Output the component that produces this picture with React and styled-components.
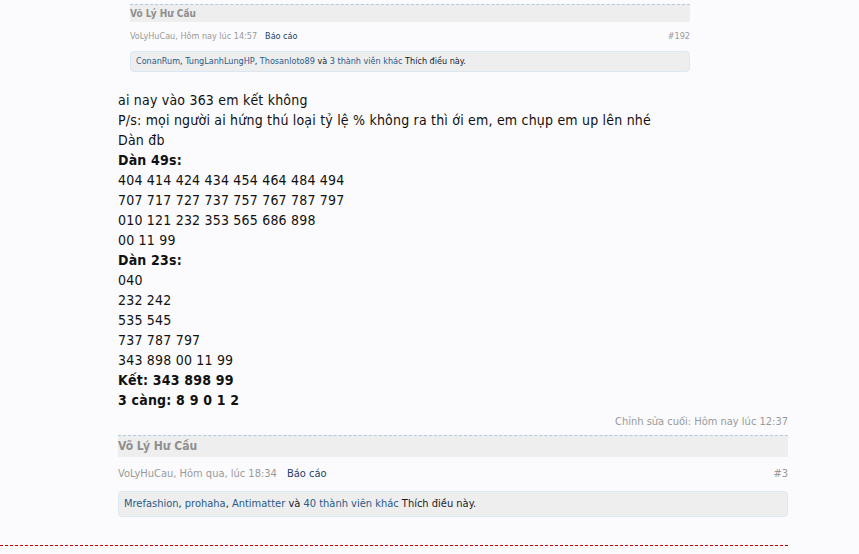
import React from "react";
import styled, { createGlobalStyle } from "styled-components";

const Global = createGlobalStyle`
  html, body { margin: 0; padding: 0; background: #fbfbfd; }
  body {
    font-family: "DejaVu Sans Condensed", "DejaVu Sans", Tahoma, sans-serif;
    font-stretch: condensed;
    color: #141414;
  }
`;

const Message = styled.div`
  width: 788px;
  border-bottom: 1px dashed #c40000;
  padding-bottom: 28px;
`;

const Content = styled.div`
  margin-left: 118px;
`;

const Quote = styled.div`
  margin: 4px 0 0 12px;
  width: 560px;
`;

const NameBand = styled.div`
  border-top: 1px dashed #a9cde6;
  background: #eeeeee;
  color: #8f8f8f;
  font-weight: bold;
  font-size: ${(p) => (p.$small ? "10px" : "12px")};
  height: ${(p) => (p.$small ? "17px" : "21px")};
  line-height: ${(p) => (p.$small ? "17px" : "21px")};
`;

const MetaRow = styled.div`
  display: flex;
  align-items: center;
  justify-content: space-between;
  color: #999999;
  font-size: ${(p) => (p.$small ? "9px" : "11px")};
  line-height: ${(p) => (p.$small ? "14px" : "16px")};
  margin-top: ${(p) => (p.$small ? "7px" : "9px")};
`;

const MetaLeft = styled.span`
  display: flex;
  gap: ${(p) => (p.$small ? "8px" : "10px")};
`;

const Report = styled.span`
  color: #1d3f6a;
`;

const Likes = styled.div`
  margin-top: ${(p) => (p.$small ? "8px" : "9px")};
  background: #eeeeee;
  border: 1px solid #d9e8f4;
  border-radius: 4px;
  padding: 0 5px;
  font-size: ${(p) => (p.$small ? "9px" : "11px")};
  line-height: ${(p) => (p.$small ? "19px" : "24px")};
  color: #1a1a2a;
`;

const LikeLink = styled.span`
  color: #2b5a8a;
`;

const Body = styled.div`
  margin-top: 18px;
  font-size: 14px;
  line-height: 20px;
  letter-spacing: 0.2px;
  color: #111111;
`;

const Line = styled.div`
  font-weight: ${(p) => (p.$bold ? "bold" : "normal")};
`;

const Edited = styled.div`
  margin-top: 5px;
  text-align: right;
  font-size: 11px;
  line-height: 14px;
  color: #999999;
`;

const Footer = styled.div`
  margin-top: 6px;
`;

function PostFooter({ small, name, meta, num, likes, others }) {
  return (
    <>
      <NameBand $small={small}>{name}</NameBand>
      <MetaRow $small={small}>
        <MetaLeft $small={small}>
          <span>{meta}</span>
          <Report>Báo cáo</Report>
        </MetaLeft>
        <span>{num}</span>
      </MetaRow>
      <Likes $small={small}>
        {likes.map((l, i) => (
          <React.Fragment key={l}>
            <LikeLink>{l}</LikeLink>
            {i < likes.length - 1 ? ", " : " và "}
          </React.Fragment>
        ))}
        <LikeLink>{others}</LikeLink> Thích điều này.
      </Likes>
    </>
  );
}

const lines = [
  ["ai nay vào 363 em kết không"],
  ["P/s: mọi người ai hứng thú loại tỷ lệ % không ra thì ới em, em chụp em up lên nhé"],
  ["Dàn đb"],
  ["Dàn 49s:", true],
  ["404 414 424 434 454 464 484 494"],
  ["707 717 727 737 757 767 787 797"],
  ["010 121 232 353 565 686 898"],
  ["00 11 99"],
  ["Dàn 23s:", true],
  ["040"],
  ["232 242"],
  ["535 545"],
  ["737 787 797"],
  ["343 898 00 11 99"],
  ["Kết: 343 898 99", true],
  ["3 càng: 8 9 0 1 2", true],
];

export default function App() {
  return (
    <>
      <Global />
      <Message>
        <Content>
          <Quote>
            <PostFooter
              small
              name="Võ Lý Hư Cầu"
              meta="VoLyHuCau, Hôm nay lúc 14:57"
              num="#192"
              likes={["ConanRum", "TungLanhLungHP", "Thosanloto89"]}
              others="3 thành viên khác"
            />
          </Quote>
          <Body>
            {lines.map(([t, b], i) => (
              <Line key={i} $bold={b}>{t}</Line>
            ))}
          </Body>
          <Edited>Chỉnh sửa cuối: Hôm nay lúc 12:37</Edited>
          <Footer>
            <PostFooter
              name="Võ Lý Hư Cầu"
              meta="VoLyHuCau, Hôm qua, lúc 18:34"
              num="#3"
              likes={["Mrefashion", "prohaha", "Antimatter"]}
              others="40 thành viên khác"
            />
          </Footer>
        </Content>
      </Message>
    </>
  );
}
